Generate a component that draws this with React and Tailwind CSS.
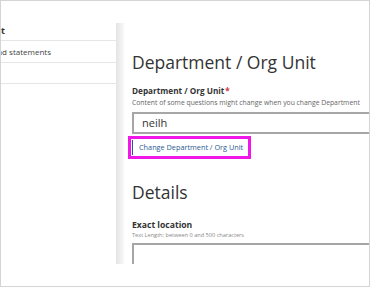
const font = { fontFamily: '"Open Sans", "Noto Sans", sans-serif' };

function SideNav() {
  return (
    <div className="w-[115px] shrink-0 pt-[22px]">
      <div className="h-[18px] border-b border-[#e6e6e6] pt-[1px]">
        <div className="flex w-[4px] justify-end whitespace-nowrap text-[9px] font-bold leading-[14px] text-[#333]">Payment</div>
      </div>
      <div className="h-[22px] border-b border-[#e6e6e6] pt-[5px]">
        <div className="flex w-[50px] justify-end whitespace-nowrap text-[8px] leading-[12px] text-[#444]">Bank and statements</div>
      </div>
      <div className="h-[21px] border-b border-[#e6e6e6]" />
    </div>
  );
}

export default function App() {
  return (
    <div className="h-[287px] w-[370px] overflow-hidden border border-[#d4d4d4] bg-white" style={font}>
      <div className="flex h-[263px] overflow-hidden">
        <SideNav />
        <div className="mt-[22px] w-[8px] shrink-0 bg-gradient-to-r from-[#e4e4e4] to-[#f8f8f8]" />
        <div className="min-w-0 flex-1 pl-[8px] pt-[22px]">
          <h1 className="mt-[27px] whitespace-nowrap text-[17.5px] leading-[24px] text-[#333]">Department / Org Unit</h1>
          <div className="mt-[11px] whitespace-nowrap text-[8.2px] font-bold leading-[12px] text-[#333]">
            Department / Org Unit<span className="ml-[1px] text-[#d13438]">*</span>
          </div>
          <div className="mt-[1px] whitespace-nowrap text-[6.8px] leading-[10px] text-[#666]">
            Content of some questions might change when you change Department
          </div>
          <div className="mt-[4px] h-[22px] border-2 border-r-0 border-[#a6a6a6] pl-[8px] text-[11px] leading-[18px] text-[#333]">
            neilh
          </div>
          <div className="-ml-[4px] mt-[2px] w-[123px] border-[3px] border-[#f018e8] px-[1px] py-[1px]">
            <div className="whitespace-nowrap border-l border-[#2b579a] pl-[6px] text-[7.3px] leading-[15px] text-[#2b5a93]">
              Change Department / Org Unit
            </div>
          </div>
          <h2 className="mt-[21px] text-[17.5px] leading-[24px] text-[#333]">Details</h2>
          <div className="mt-[15px] text-[8.6px] font-bold leading-[12px] text-[#333]">Exact location</div>
          <div className="whitespace-nowrap text-[5.6px] leading-[9px] text-[#888]">Text Length: between 0 and 500 characters</div>
          <div className="mt-[3px] h-[40px] border-2 border-r-0 border-[#a6a6a6]" />
        </div>
      </div>
    </div>
  );
}
